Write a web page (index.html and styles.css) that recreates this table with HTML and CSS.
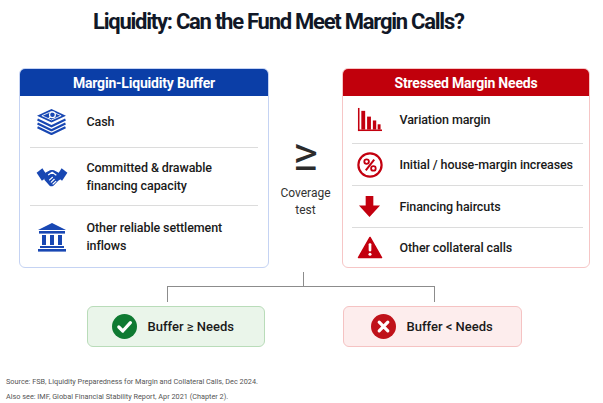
FILE: index.html
```html
<!DOCTYPE html>
<html lang="en">
<head>
<meta charset="utf-8">
<title>Liquidity: Can the Fund Meet Margin Calls?</title>
<link rel="stylesheet" href="styles.css">
</head>
<body>
<div class="page">
  <h1 class="title">Liquidity: Can the Fund Meet Margin Calls?</h1>

  <div class="main">
    <section class="card card-blue">
      <div class="card-head">Margin-Liquidity Buffer</div>
      <div class="card-body">
        <div class="row lr1">
          <span class="ico">
            <svg viewBox="0 0 32 28" width="31" height="27">
              <g fill="none" stroke="#1847b3" stroke-width="2.2" stroke-linejoin="round">
                <polyline points="1.5,12 16,19 30.5,12"/>
                <polyline points="1.5,16 16,23 30.5,16"/>
                <polyline points="1.5,20 16,27 30.5,20"/>
              </g>
              <polygon points="16,1 31,8 16,15 1,8" fill="#1847b3"/>
              <polygon points="16,3.6 26,8 16,12.4 6,8" fill="none" stroke="#fff" stroke-width="0.9"/>
              <circle cx="17" cy="7" r="3" fill="none" stroke="#fff" stroke-width="1.3"/>
              <line x1="14.8" y1="9.2" x2="12.8" y2="11" stroke="#fff" stroke-width="1.3"/>
            </svg>
          </span>
          <span class="txt">Cash</span>
        </div>
        <div class="row lr2">
          <span class="ico">
            <svg viewBox="0 0 32 26" width="32" height="25">
              <polygon points="0,9 6,4.5 11.5,13 5.5,17.5" fill="#1847b3"/>
              <polygon points="32,9 26,4.5 20.5,13 26.5,17.5" fill="#1847b3"/>
              <path d="M9,9 L14,6.5 Q16,5.8 18,6.5 L23,9 L25,14.5 Q24.5,16.5 22.5,17.5 L17.5,22.5 Q15.2,24 13.5,22.5 L8,16.5 Z" fill="#1847b3"/>
              <path d="M12,11.5 L16.2,8.6 L20.5,11.8" fill="none" stroke="#fff" stroke-width="1.3" stroke-linejoin="round"/>
              <path d="M13.5,16.5 L16.5,13.8 M15.2,18.8 L18.3,15.9 M17,20.8 L20,18" fill="none" stroke="#fff" stroke-width="1.2" stroke-linecap="round"/>
            </svg>
          </span>
          <span class="txt">Committed &amp; drawable<br>financing capacity</span>
        </div>
        <div class="row lr3">
          <span class="ico">
            <svg viewBox="0 0 30 30" width="30" height="30">
              <g fill="#1847b3">
                <polygon points="15,1 29,8 1,8"/>
                <rect x="2" y="9" width="26" height="2.6"/>
                <rect x="5" y="13" width="4" height="10"/>
                <rect x="13" y="13" width="4" height="10"/>
                <rect x="21" y="13" width="4" height="10"/>
                <rect x="3" y="24" width="24" height="2"/>
                <rect x="1" y="27" width="28" height="2.6"/>
              </g>
            </svg>
          </span>
          <span class="txt">Other reliable settlement<br>inflows</span>
        </div>
      </div>
    </section>

    <div class="mid">
      <div class="geq">≥</div>
      <div class="cov">Coverage<br>test</div>
    </div>

    <section class="card card-red">
      <div class="card-head">Stressed Margin Needs</div>
      <div class="card-body">
        <div class="row rr1">
          <span class="ico">
            <svg viewBox="0 0 26 26" width="25" height="25">
              <g fill="#c3000f">
                <rect x="1" y="1" width="1.6" height="24"/>
                <rect x="1" y="23.4" width="25" height="1.6"/>
                <rect x="4.5" y="4" width="4" height="19.5"/>
                <rect x="10.5" y="10" width="4" height="13.5"/>
                <rect x="16.5" y="14" width="3.5" height="9.5"/>
                <rect x="21.5" y="18" width="3" height="5.5"/>
              </g>
            </svg>
          </span>
          <span class="txt">Variation margin</span>
        </div>
        <div class="row rr2">
          <span class="ico">
            <svg viewBox="0 0 26 26" width="26" height="26">
              <g fill="none" stroke="#c3000f">
                <circle cx="13" cy="13" r="11.6" stroke-width="2.2"/>
                <circle cx="9.6" cy="9.6" r="2.3" stroke-width="1.8"/>
                <circle cx="16.4" cy="16.4" r="2.3" stroke-width="1.8"/>
                <line x1="17.2" y1="7.6" x2="8.8" y2="18.4" stroke-width="2"/>
              </g>
            </svg>
          </span>
          <span class="txt">Initial / house-margin increases</span>
        </div>
        <div class="row rr3">
          <span class="ico">
            <svg viewBox="0 0 24 24" width="23" height="23">
              <polygon points="8,1 16,1 16,11 23,11 12,23 1,11 8,11" fill="#c3000f"/>
            </svg>
          </span>
          <span class="txt">Financing haircuts</span>
        </div>
        <div class="row rr4">
          <span class="ico">
            <svg viewBox="0 0 26 24" width="26" height="23">
              <path d="M13,1.5 L25,22.5 L1,22.5 Z" fill="#c3000f" stroke="#c3000f" stroke-width="1.6" stroke-linejoin="round"/>
              <rect x="11.6" y="7.5" width="2.8" height="8.6" rx="1.2" fill="#fff"/>
              <circle cx="13" cy="19" r="1.6" fill="#fff"/>
            </svg>
          </span>
          <span class="txt">Other collateral calls</span>
        </div>
      </div>
    </section>
  </div>

  <div class="connector">
    <div class="stem"></div>
    <div class="branch"></div>
  </div>

  <div class="outcomes">
    <div class="out out-ok">
      <svg class="badge" viewBox="0 0 25 25" width="25" height="25">
        <circle cx="12.5" cy="12.5" r="12.5" fill="#0f7a32"/>
        <polyline points="6.8,13 10.8,17 18.4,8.6" fill="none" stroke="#fff" stroke-width="3.2" stroke-linecap="round" stroke-linejoin="round"/>
      </svg>
      <span class="out-txt">Buffer ≥ Needs</span>
    </div>
    <div class="out out-bad">
      <svg class="badge" viewBox="0 0 25 25" width="25" height="25">
        <circle cx="12.5" cy="12.5" r="12.5" fill="#c0121a"/>
        <path d="M8.2,8.2 L16.8,16.8 M16.8,8.2 L8.2,16.8" stroke="#fff" stroke-width="3.2" stroke-linecap="round"/>
      </svg>
      <span class="out-txt">Buffer &lt; Needs</span>
    </div>
  </div>

  <footer class="source">
    <p>Source: FSB, Liquidity Preparedness for Margin and Collateral Calls, Dec 2024.</p>
    <p>Also see: IMF, Global Financial Stability Report, Apr 2021 (Chapter 2).</p>
  </footer>
</div>
</body>
</html>
```

FILE: styles.css
```css
* { box-sizing: border-box; }

html, body {
  margin: 0;
  padding: 0;
  background: #ffffff;
}

body {
  width: 603px;
  height: 403px;
  overflow: hidden;
  font-family: Roboto, "Liberation Sans", Arial, sans-serif;
  color: #1a1a1a;
}

.page {
  width: 603px;
  height: 403px;
}

.title {
  margin: 0;
  padding: 9px 0 0 93px;
  height: 35px;
  font-size: 22px;
  line-height: 26px;
  font-weight: 700;
  letter-spacing: -1.25px;
  color: #111827;
  white-space: nowrap;
}

.main {
  display: flex;
  margin-top: 33px;
  padding-left: 19px;
  height: 200px;
}

.card {
  display: flex;
  flex-direction: column;
  height: 200px;
  border-radius: 6px;
  border: 1.5px solid;
  overflow: hidden;
  background: #fff;
}

.card-blue {
  width: 250px;
  border-color: #c5d3f3;
}

.card-red {
  width: 248px;
  border-color: #f6c6c6;
}

.card-head {
  height: 27px;
  display: flex;
  align-items: center;
  justify-content: center;
  color: #ffffff;
  font-size: 14px;
  font-weight: 700;
  letter-spacing: -0.2px;
}

.card-blue .card-head { background: #0b3ea7; }
.card-red .card-head { background: #c1000c; }

.card-body {
  flex: 1;
  display: flex;
  flex-direction: column;
}

.card-blue .card-body { padding: 0 10px 0 9.5px; }
.card-red .card-body { padding: 0 6px 0 8.5px; }

.row {
  display: flex;
  align-items: center;
  border-bottom: 1px solid #dcdcdc;
}

.row:last-child {
  border-bottom: none;
  flex: 1;
}

.lr1 { height: 52px; }
.lr2 { height: 58px; }
.rr1 { height: 48px; }
.rr2, .rr3 { height: 42px; }

.ico {
  display: flex;
  align-items: center;
  justify-content: center;
  flex: none;
}

.ico svg { display: block; }

.card-blue .ico { width: 44px; }
.card-red .ico { width: 36px; }

.txt {
  font-size: 12.5px;
  line-height: 18px;
  font-weight: 500;
  color: #1a1a1a;
  letter-spacing: -0.1px;
}

.card-blue .txt { margin-left: 13px; }
.card-red .txt { margin-left: 12px; }

.mid {
  width: 73px;
  display: flex;
  flex-direction: column;
  align-items: center;
  padding-top: 60px;
}

.geq {
  font-size: 48px;
  line-height: 52px;
  font-weight: 400;
  color: #2b2b2b;
}

.cov {
  margin-top: 5px;
  font-size: 12px;
  line-height: 17px;
  color: #333333;
  text-align: center;
}

.connector {
  height: 34px;
}

.stem {
  margin: 4px 0 0 302.5px;
  width: 0;
  height: 14px;
  border-left: 1.5px solid #8c8c8c;
}

.branch {
  margin-left: 166.5px;
  width: 268.5px;
  height: 16px;
  border: 1.5px solid #8c8c8c;
  border-bottom: none;
}

.outcomes {
  display: flex;
  height: 41px;
}

.out {
  display: flex;
  align-items: center;
  height: 41px;
  border: 1.5px solid;
  border-radius: 6px;
}

.out-ok {
  margin-left: 87px;
  width: 178px;
  padding-left: 23.5px;
  background: #eaf5ea;
  border-color: #b9dcb9;
}

.out-bad {
  margin-left: 78px;
  width: 179px;
  padding-left: 26.5px;
  background: #fdeded;
  border-color: #f5c3c3;
}

.badge {
  display: block;
  flex: none;
}

.out-txt {
  margin-left: 11px;
  font-size: 13px;
  font-weight: 500;
  color: #1a1a1a;
}

.source {
  margin-top: 28px;
  padding-left: 6px;
}

.source p {
  margin: 0;
  font-size: 7.3px;
  line-height: 14.5px;
  color: #555555;
  white-space: nowrap;
}
```
